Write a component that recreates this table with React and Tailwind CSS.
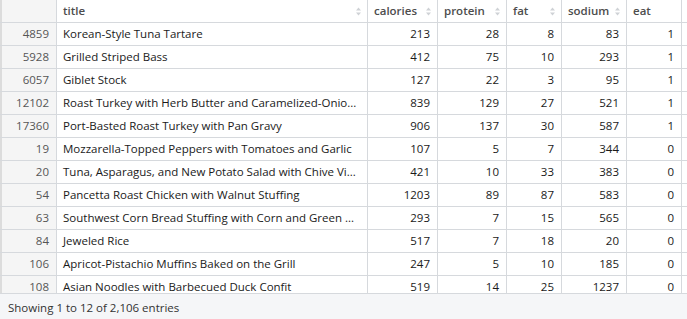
const rows = [
  [4859, 'Korean-Style Tuna Tartare', 213, 28, 8, 83, 1],
  [5928, 'Grilled Striped Bass', 412, 75, 10, 293, 1],
  [6057, 'Giblet Stock', 127, 22, 3, 95, 1],
  [12102, 'Roast Turkey with Herb Butter and Caramelized-Onio...', 839, 129, 27, 521, 1],
  [17360, 'Port-Basted Roast Turkey with Pan Gravy', 906, 137, 30, 587, 1],
  [19, 'Mozzarella-Topped Peppers with Tomatoes and Garlic', 107, 5, 7, 344, 0],
  [20, 'Tuna, Asparagus, and New Potato Salad with Chive Vi...', 421, 10, 33, 383, 0],
  [54, 'Pancetta Roast Chicken with Walnut Stuffing', 1203, 89, 87, 583, 0],
  [63, 'Southwest Corn Bread Stuffing with Corn and Green ...', 293, 7, 15, 565, 0],
  [84, 'Jeweled Rice', 517, 7, 18, 20, 0],
  [106, 'Apricot-Pistachio Muffins Baked on the Grill', 247, 5, 10, 185, 0],
  [108, 'Asian Noodles with Barbecued Duck Confit', 519, 14, 25, 1237, 0],
]

const cols = ['title', 'calories', 'protein', 'fat', 'sodium', 'eat']

function SortIcon() {
  return (
    <svg width="7" height="9" viewBox="0 0 7 9" className="absolute right-[5px] top-[7px]">
      <path d="M3.5 0.5 L6 3.5 H1 Z" fill="#cfd2d6" />
      <path d="M3.5 8.5 L6 5.5 H1 Z" fill="#cfd2d6" />
    </svg>
  )
}

const grid = 'grid grid-cols-[57px_311px_70px_69px_55px_65px_55px]'

export default function App() {
  return (
    <div className="w-[687px] h-[319px] bg-white flex flex-col overflow-hidden text-[11.5px] text-[#1a1a1a]" style={{ fontFamily: '"Open Sans", "Noto Sans", sans-serif' }}>
      <div className="h-[293px] overflow-hidden">
        <div className={`${grid} h-[23px] border-b border-[#d6d9dd]`}>
          <div className="bg-[#f5f5f5] border-l-2 border-l-[#dcdcdc] border-r border-[#d6d9dd]" />
          {cols.map((c) => (
            <div key={c} className="relative border-r border-[#d6d9dd] px-[6px] leading-[22px] font-semibold text-[#4d4d4d]">
              {c}
              {c !== 'eat' && <SortIcon />}
            </div>
          ))}
        </div>
        {rows.map((r) => (
          <div key={r[0]} className={`${grid} h-[23px] border-b border-[#d6d9dd]`}>
            <div className="bg-[#f5f5f5] border-l-2 border-l-[#dcdcdc] border-r border-[#d6d9dd] text-right pr-[7px] leading-[22px] text-[#555]">
              {r[0]}
            </div>
            <div className="border-r border-[#d6d9dd] px-[6px] leading-[22px] whitespace-nowrap overflow-hidden">{r[1]}</div>
            {r.slice(2).map((v, i) => (
              <div key={i} className="border-r border-[#d6d9dd] text-right pr-[7px] leading-[22px]">
                {v}
              </div>
            ))}
          </div>
        ))}
      </div>
      <div className="flex-1 bg-[#f5f6f8] border-t border-[#d6d9dd] px-[8px] pt-[4px] leading-[20px] text-[#333]">
        Showing 1 to 12 of 2,106 entries
      </div>
    </div>
  )
}
